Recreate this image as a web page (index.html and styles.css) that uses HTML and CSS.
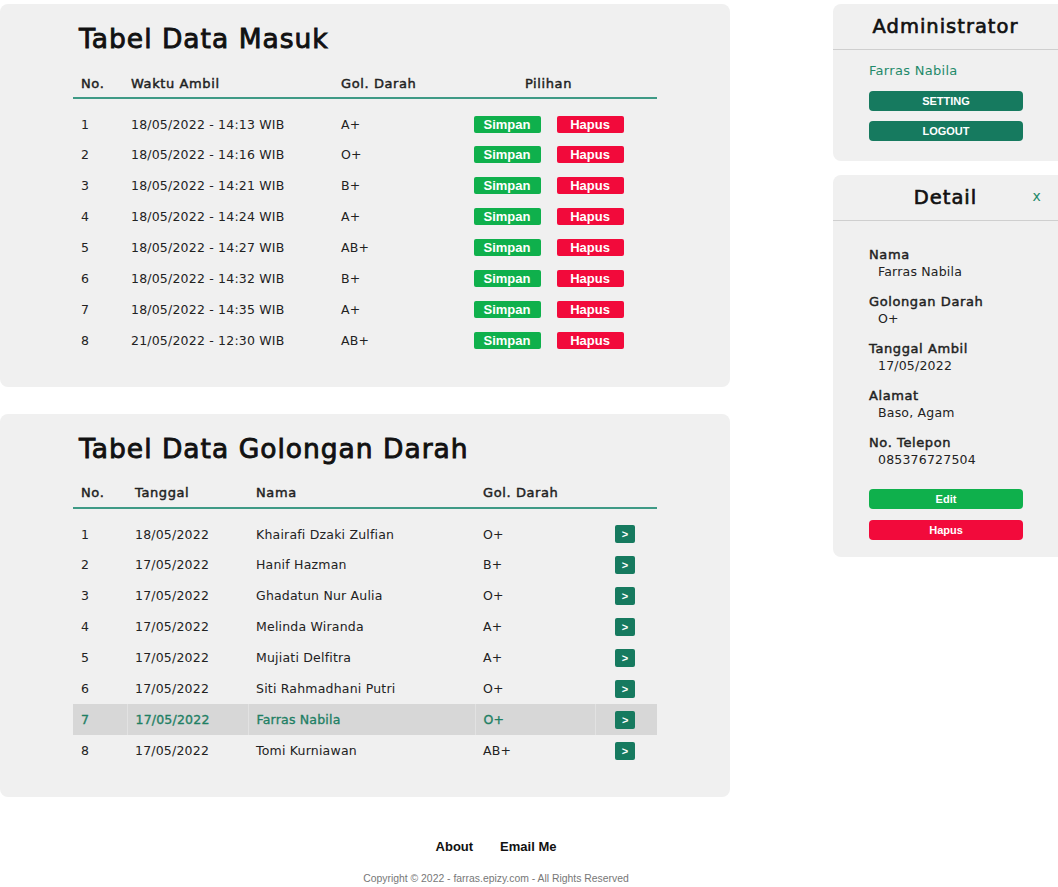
FILE: index.html
```html
<!DOCTYPE html>
<html lang="id">
<head>
<meta charset="utf-8">
<title>Dashboard Donor Darah</title>
<link rel="stylesheet" href="styles.css">
</head>
<body>
<div class="layout">
  <main class="main">
    <section class="card">
      <h2 class="card-title">Tabel Data Masuk</h2>
      <table class="data-table masuk">
        <thead>
          <tr><th class="c-no">No.</th><th class="c-waktu">Waktu Ambil</th><th class="c-gol">Gol. Darah</th><th class="c-pilihan">Pilihan</th></tr>
        </thead>
        <tbody>
          <tr><td>1</td><td>18/05/2022 - 14:13 WIB</td><td>A+</td><td class="actions"><button class="btn-sm simpan">Simpan</button><button class="btn-sm hapus">Hapus</button></td></tr>
          <tr><td>2</td><td>18/05/2022 - 14:16 WIB</td><td>O+</td><td class="actions"><button class="btn-sm simpan">Simpan</button><button class="btn-sm hapus">Hapus</button></td></tr>
          <tr><td>3</td><td>18/05/2022 - 14:21 WIB</td><td>B+</td><td class="actions"><button class="btn-sm simpan">Simpan</button><button class="btn-sm hapus">Hapus</button></td></tr>
          <tr><td>4</td><td>18/05/2022 - 14:24 WIB</td><td>A+</td><td class="actions"><button class="btn-sm simpan">Simpan</button><button class="btn-sm hapus">Hapus</button></td></tr>
          <tr><td>5</td><td>18/05/2022 - 14:27 WIB</td><td>AB+</td><td class="actions"><button class="btn-sm simpan">Simpan</button><button class="btn-sm hapus">Hapus</button></td></tr>
          <tr><td>6</td><td>18/05/2022 - 14:32 WIB</td><td>B+</td><td class="actions"><button class="btn-sm simpan">Simpan</button><button class="btn-sm hapus">Hapus</button></td></tr>
          <tr><td>7</td><td>18/05/2022 - 14:35 WIB</td><td>A+</td><td class="actions"><button class="btn-sm simpan">Simpan</button><button class="btn-sm hapus">Hapus</button></td></tr>
          <tr><td>8</td><td>21/05/2022 - 12:30 WIB</td><td>AB+</td><td class="actions"><button class="btn-sm simpan">Simpan</button><button class="btn-sm hapus">Hapus</button></td></tr>
        </tbody>
      </table>
    </section>

    <section class="card">
      <h2 class="card-title">Tabel Data Golongan Darah</h2>
      <table class="data-table golongan">
        <thead>
          <tr><th class="g-no">No.</th><th class="g-tgl">Tanggal</th><th class="g-nama">Nama</th><th class="g-gol">Gol. Darah</th><th class="g-aksi"></th></tr>
        </thead>
        <tbody>
          <tr><td>1</td><td>18/05/2022</td><td>Khairafi Dzaki Zulfian</td><td>O+</td><td class="aksi"><button class="btn-go">&gt;</button></td></tr>
          <tr><td>2</td><td>17/05/2022</td><td>Hanif Hazman</td><td>B+</td><td class="aksi"><button class="btn-go">&gt;</button></td></tr>
          <tr><td>3</td><td>17/05/2022</td><td>Ghadatun Nur Aulia</td><td>O+</td><td class="aksi"><button class="btn-go">&gt;</button></td></tr>
          <tr><td>4</td><td>17/05/2022</td><td>Melinda Wiranda</td><td>A+</td><td class="aksi"><button class="btn-go">&gt;</button></td></tr>
          <tr><td>5</td><td>17/05/2022</td><td>Mujiati Delfitra</td><td>A+</td><td class="aksi"><button class="btn-go">&gt;</button></td></tr>
          <tr><td>6</td><td>17/05/2022</td><td>Siti Rahmadhani Putri</td><td>O+</td><td class="aksi"><button class="btn-go">&gt;</button></td></tr>
          <tr class="active"><td>7</td><td>17/05/2022</td><td>Farras Nabila</td><td>O+</td><td class="aksi"><button class="btn-go">&gt;</button></td></tr>
          <tr><td>8</td><td>17/05/2022</td><td>Tomi Kurniawan</td><td>AB+</td><td class="aksi"><button class="btn-go">&gt;</button></td></tr>
        </tbody>
      </table>
    </section>
  </main>

  <aside class="side">
    <section class="panel">
      <div class="panel-head"><h3>Administrator</h3></div>
      <div class="panel-body admin-body">
        <p class="admin-name">Farras Nabila</p>
        <button class="btn-block teal">SETTING</button>
        <button class="btn-block teal">LOGOUT</button>
      </div>
    </section>

    <section class="panel">
      <div class="panel-head"><h3>Detail</h3><span class="close">x</span></div>
      <div class="panel-body detail-body">
        <dl class="fields">
          <dt>Nama</dt><dd>Farras Nabila</dd>
          <dt>Golongan Darah</dt><dd>O+</dd>
          <dt>Tanggal Ambil</dt><dd>17/05/2022</dd>
          <dt>Alamat</dt><dd>Baso, Agam</dd>
          <dt>No. Telepon</dt><dd>085376727504</dd>
        </dl>
        <button class="btn-block green">Edit</button>
        <button class="btn-block red">Hapus</button>
      </div>
    </section>
  </aside>
</div>

<footer class="footer">
  <nav class="footer-nav"><a href="#">About</a><a href="#">Email Me</a></nav>
  <p class="copyright">Copyright © 2022 - farras.epizy.com - All Rights Reserved</p>
</footer>
</body>
</html>
```

FILE: styles.css
```css
* { box-sizing: border-box; }

body {
  margin: 0;
  background: #ffffff;
  color: #222222;
  font-family: "DejaVu Sans", "Open Sans", sans-serif;
  font-size: 12.5px;
  letter-spacing: 0.2px;
}

.layout {
  display: flex;
  align-items: flex-start;
  gap: 103px;
  padding-top: 4px;
}

.main {
  width: 730px;
  display: flex;
  flex-direction: column;
  gap: 27px;
}

.card {
  background: #f0f0f0;
  border-radius: 8px;
  padding: 19px 73px 30px;
  height: 383px;
}

.card-title {
  margin: 0 0 13px 6px;
  font-size: 26.5px;
  line-height: 32px;
  letter-spacing: 1px;
  font-weight: 400;
  -webkit-text-stroke: 0.9px #111111;
  color: #111111;
}

.data-table {
  width: 584px;
  border-collapse: collapse;
  table-layout: fixed;
}

.data-table th {
  height: 30px;
  padding: 0 0 0 8px;
  text-align: left;
  font-weight: 400;
  -webkit-text-stroke: 0.45px #222222;
  font-size: 13px;
  letter-spacing: 0.6px;
  border-bottom: 2px solid #3f9a86;
}

.data-table td {
  height: 31px;
  padding: 0 0 0 8px;
  white-space: nowrap;
}

.masuk thead th { padding-top: 2px; }

.data-table tbody tr:first-child td {
  height: 41px;
  padding-top: 10px;
}

/* column widths, Tabel Data Masuk */
.c-no { width: 50px; }
.c-waktu { width: 210px; }
.c-gol { width: 107px; }
.data-table .c-pilihan { text-align: center; padding-left: 0; }

.actions {
  text-align: center;
  font-size: 0;
}
.data-table td.actions { padding-left: 0; }

.btn-sm {
  border: 0;
  border-radius: 2px;
  color: #ffffff;
  font-family: "Liberation Sans", Arial, sans-serif;
  font-weight: 700;
  font-size: 13px;
  letter-spacing: 0;
  line-height: 17px;
  height: 17px;
  width: 67px;
  padding: 0;
  vertical-align: middle;
}
.btn-sm + .btn-sm { margin-left: 16px; }
.simpan { background: #0fb04c; }
.hapus { background: #f20a3b; }

/* column widths, Tabel Data Golongan Darah */
.g-no { width: 54px; }
.g-tgl { width: 121px; }
.g-nama { width: 227px; }
.g-gol { width: 120px; }

.data-table td.aksi { padding: 0; text-align: center; }

.golongan tr.active td {
  background: #d7d7d7;
  color: #1f7f64;
  -webkit-text-stroke: 0.35px #1f7f64;
  border-left: 1px solid #e2e2e2;
}
.golongan tr.active td:first-child { border-left: 0; }
.golongan tr.active td.aksi { -webkit-text-stroke: 0; }

.btn-go {
  width: 20px;
  height: 18px;
  border: 0;
  border-radius: 2px;
  background: #167a5f;
  color: #ffffff;
  font-family: "Liberation Sans", Arial, sans-serif;
  font-weight: 700;
  font-size: 11px;
  padding: 0;
  margin-right: 2px;
  vertical-align: middle;
}

/* sidebar */
.side {
  width: 225px;
  display: flex;
  flex-direction: column;
  gap: 14px;
}

.panel {
  background: #f0f0f0;
  border-radius: 8px 0 0 8px;
}

.panel-head {
  position: relative;
  height: 46px;
  display: flex;
  align-items: center;
  justify-content: center;
  border-bottom: 1px solid #cfcfcf;
}

.panel-head h3 {
  margin: 0;
  font-size: 19.5px;
  letter-spacing: 1px;
  font-weight: 400;
  -webkit-text-stroke: 0.65px #111111;
  color: #111111;
}

.close {
  position: absolute;
  right: 17px;
  top: 13px;
  color: #1f8a6a;
  font-size: 14px;
}

.panel-body { padding: 0 35px 20px 36px; }

.admin-name {
  margin: 0;
  padding-top: 13px;
  line-height: 16px;
  color: #1f8a6a;
  font-size: 13px;
  letter-spacing: 0.3px;
}

.btn-block {
  display: block;
  width: 154px;
  height: 20px;
  border: 0;
  border-radius: 4px;
  color: #ffffff;
  font-family: "Liberation Sans", Arial, sans-serif;
  font-weight: 700;
  font-size: 11px;
  letter-spacing: 0;
  padding: 0;
}
.btn-block + .btn-block { margin-top: 11px; }

.admin-body .btn-block:first-of-type { margin-top: 12px; }
.admin-body .btn-block + .btn-block { margin-top: 10px; }

.teal { background: #167a5f; }
.green { background: #0fb04c; }
.red { background: #f20a3b; }

.detail-body { padding-top: 25px; padding-bottom: 17px; }

.fields { margin: 0 0 21px; }
.fields dt {
  font-weight: 400;
  -webkit-text-stroke: 0.45px #222222;
  line-height: 17px;
  font-size: 13px;
  letter-spacing: 0.6px;
}
.fields dd {
  margin: 0 0 13px 9px;
  line-height: 17px;
}
.fields dd:last-child { margin-bottom: 0; }

/* footer */
.footer {
  width: 992px;
  text-align: center;
  padding-top: 42px;
  font-family: "Liberation Sans", Arial, sans-serif;
  letter-spacing: 0;
}

.footer-nav {
  display: flex;
  justify-content: center;
  gap: 27px;
}
.footer-nav a {
  color: #111111;
  text-decoration: none;
  font-weight: 700;
  font-size: 13px;
  line-height: 16px;
}

.copyright {
  margin: 18px 0 0;
  color: #777777;
  font-size: 10.4px;
}
```
